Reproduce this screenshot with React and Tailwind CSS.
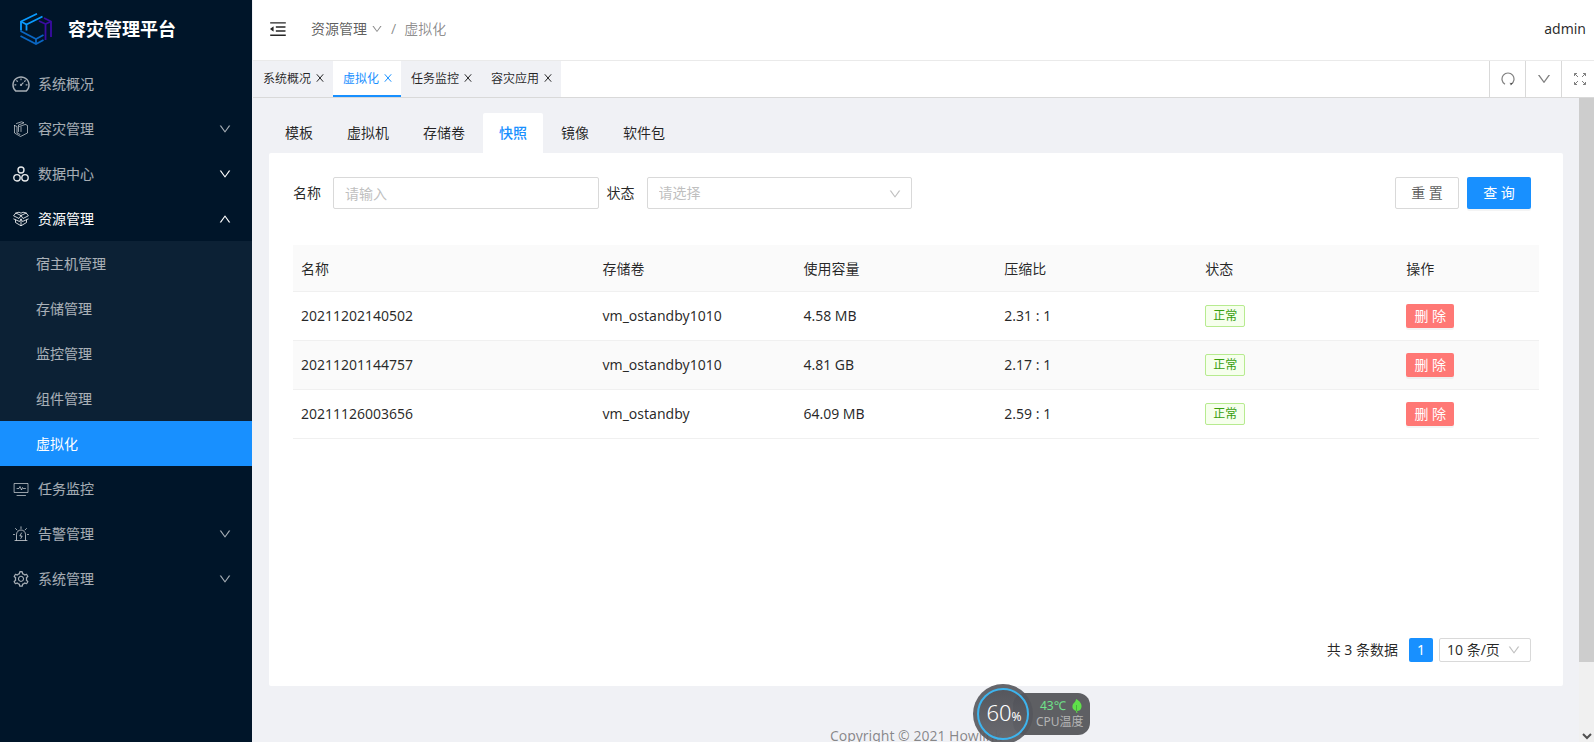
import {
  AiOutlineDashboard, AiOutlineSetting, AiOutlineDown, AiOutlineUp,
  AiOutlineMenuFold,
} from "react-icons/ai";

const stroke = { fill: "none", stroke: "currentColor", strokeLinecap: "round", strokeLinejoin: "round" };

function Logo() {
  return (
    <svg className="size-8 shrink-0" viewBox="0 0 32 32" fill="none" strokeWidth="1.800" aria-hidden="true">
      <g stroke="#0a9bff">
        <path d="M1 17.500V8.500L17 .8" />
        <path d="M6.500 17.500V11.500L22.500 3.500" />
        <path d="M1 8.500L6.500 11.500" />
      </g>
      <g stroke="#3a0ca3">
        <path d="M19 8L25.500 11V27" />
        <path d="M24 5L31 8.500V24" />
        <path d="M25.500 11L31 8.500" />
      </g>
      <g stroke="#0a66c2">
        <path d="M.5 18L16 26L23.500 22" />
        <path d="M.5 23L16 31L23.500 27" />
        <path d="M16 26V31" />
      </g>
    </svg>
  );
}

function BooksIcon() {
  return (
    <svg className="size-4" viewBox="0 0 16 16" {...stroke} strokeWidth=".9" aria-hidden="true">
      <path d="M1.500 4.500V12L7.500 15.500L14.500 12V4.500L12.500 3.500" />
      <path d="M1.500 4.500L4 5.500V12L7 13.500" />
      <path d="M3.500 2.500L8.500 .8L11 1.800L5.500 4V10.500M6.500 5.500L12 3.500M8 6V10.500" />
    </svg>
  );
}

function NodesIcon() {
  return (
    <svg className="size-4" viewBox="0 0 16 16" {...stroke} strokeWidth="1.4" aria-hidden="true">
      <circle cx="8" cy="4" r="3" />
      <circle cx="4" cy="11.800" r="3.200" />
      <circle cx="12" cy="11.800" r="3.200" />
    </svg>
  );
}

function BoxIcon() {
  return (
    <svg className="size-4" viewBox="0 0 16 16" {...stroke} strokeWidth=".9" aria-hidden="true">
      <path d="M8 4.500L2.800 2L.6 4.800L6 7.500L8 4.500L10 7.500L15.400 4.800L13.200 2L8 4.500Z" />
      <path d="M2.800 2L6 1.200L8 2.200L10 1.200L13.200 2" />
      <path d="M.8 8L6.500 10.500L8 8L9.500 10.500L15.200 8M2.500 9V11.500L8 14.800L13.500 11.500V9M8 8V14.500" />
    </svg>
  );
}

function MonitorIcon() {
  return (
    <svg className="size-4" viewBox="0 0 16 16" {...stroke} strokeWidth=".9" aria-hidden="true">
      <path d="M1.500 2.500H15V11.500H1.500ZM4 14.500H12.500" />
      <path d="M4 7.500H6L7 5.500L8.500 9L9.500 6.500L10.200 7.500H12.500" />
    </svg>
  );
}

function AlarmIcon() {
  return (
    <svg className="size-4" viewBox="0 0 16 16" {...stroke} aria-hidden="true">
      <path d="M3.500 14V8.500A4.500 4.500 0 0 1 12.500 8.500V14M2 14.500H14" />
      <path d="M8.500 7L6.800 10H9.200L7.800 12.500M8 .8V2.500M2.500 2.500L4 4M13.500 2.500L12 4M.5 8.500H1.500M14.500 8.500H15.500" />
    </svg>
  );
}

function CloseIcon() {
  return (
    <svg className="mb-0.5 size-2" viewBox="0 0 8 8" fill="none" stroke="currentColor" aria-hidden="true">
      <path d="M.8 .3L7.200 7.700M7.200 .3L.8 7.700" />
    </svg>
  );
}

function RefreshIcon() {
  return (
    <svg className="size-3.5" viewBox="0 0 14 14" fill="none" stroke="currentColor" strokeWidth="1.200" aria-hidden="true">
      <path d="M4 12.200A6 6 0 1 1 10 12.200" />
      <path fill="currentColor" stroke="none" d="M8.500 10.800L11.800 11.200L9.800 13.600Z" />
    </svg>
  );
}

function ExpandIcon() {
  return (
    <svg className="size-3" viewBox="0 0 12 12" fill="none" stroke="currentColor" aria-hidden="true">
      <path d="M.5 3V.5H3M1 1L4 4M9 .5H11.500V3M11 1L8 4M.5 9V11.500H3M1 11L4 8M9 11.500H11.500V9M11 11L8 8" />
    </svg>
  );
}

const menu = [
  { label: "系统概况", icon: <AiOutlineDashboard className="size-5" /> },
  { label: "容灾管理", icon: <BooksIcon />, arrow: "down" },
  { label: "数据中心", icon: <NodesIcon />, arrow: "down", bright: true },
  {
    label: "资源管理", icon: <BoxIcon />, arrow: "up", open: true, bright: true,
    children: ["宿主机管理", "存储管理", "监控管理", "组件管理", "虚拟化"],
  },
  { label: "任务监控", icon: <MonitorIcon /> },
  { label: "告警管理", icon: <AlarmIcon />, arrow: "down" },
  { label: "系统管理", icon: <AiOutlineSetting className="size-[18px]" />, arrow: "down" },
];

function Sidebar() {
  return (
    <aside className="flex w-[252px] shrink-0 flex-col bg-[#001529] text-white/65">
      <div className="mb-1 flex h-[57px] items-center gap-4 pl-5 text-white">
        <Logo />
        <h1 className="text-lg font-bold">容灾管理平台</h1>
      </div>
      <nav>
        <ul>
          {menu.map((item) => (
            <li key={item.label}>
              <a href="#" className="flex h-[45px] items-center gap-[7px] pl-[11px] pr-5">
                <span className={item.bright ? "flex w-5 justify-center text-white/90" : "flex w-5 justify-center"}>{item.icon}</span>
                <span className={item.open ? "flex-1 text-white" : "flex-1"}>{item.label}</span>
                {item.arrow === "down" && <AiOutlineDown className={item.bright ? "size-3.5 text-white" : "size-3.5"} />}
                {item.arrow === "up" && <AiOutlineUp className="size-3.5 text-white" />}
              </a>
              {item.children && (
                <ul className="bg-[#0c2135]">
                  {item.children.map((child) => (
                    <li key={child}>
                      <a href="#" className={child === "虚拟化" ? "flex h-[45px] items-center bg-[#1890ff] pl-9 text-white" : "flex h-[45px] items-center pl-9"}>{child}</a>
                    </li>
                  ))}
                </ul>
              )}
            </li>
          ))}
        </ul>
      </nav>
    </aside>
  );
}

function Header() {
  return (
    <header className="flex h-[61px] shrink-0 items-center border-b border-[#eaeaea] bg-white pb-0.5 pl-[15px] pr-2">
      <button type="button" aria-label="收起菜单" className="mr-[23px] text-black/85"><AiOutlineMenuFold className="size-5" /></button>
      <nav className="flex items-center text-black/45">
        <a href="#" className="flex items-center gap-1 text-black/65">资源管理<AiOutlineDown className="size-3 text-black/45" /></a>
        <span className="mx-2">/</span>
        <span>虚拟化</span>
      </nav>
      <span className="ml-auto">admin</span>
    </header>
  );
}

function PageTabs() {
  return (
    <div className="flex h-[37px] shrink-0 overflow-hidden border-b border-[#d9d9d9] bg-white text-xs">
      {["系统概况", "虚拟化", "任务监控", "容灾应用"].map((tab) => (
        <div key={tab} className={tab === "虚拟化" ? "flex items-center gap-[5px] border-b-2 border-[#1890ff] bg-white pl-2.5 pr-[9px] pt-0.5 text-[#1890ff]" : "flex items-center gap-[5px] bg-[#f0f1f5] pl-2.5 pr-[9px]"}>
          <a href="#">{tab}</a>
          <button type="button" aria-label={"关闭" + tab}><CloseIcon /></button>
        </div>
      ))}
      <div className="-mr-[3px] ml-auto flex text-black/50">
        <button type="button" aria-label="刷新" className="grid w-9 place-items-center border-l border-[#d9d9d9]"><RefreshIcon /></button>
        <button type="button" aria-label="更多" className="grid w-9 place-items-center border-l border-[#d9d9d9]"><AiOutlineDown className="size-4" /></button>
        <button type="button" aria-label="全屏" className="grid w-9 place-items-center border-l border-[#d9d9d9]"><ExpandIcon /></button>
      </div>
    </div>
  );
}

const rows = [
  ["20211202140502", "vm_ostandby1010", "4.58 MB", "2.31 : 1"],
  ["20211201144757", "vm_ostandby1010", "4.81 GB", "2.17 : 1"],
  ["20211126003656", "vm_ostandby", "64.09 MB", "2.59 : 1"],
];

function SnapshotTable() {
  return (
    <table className="mt-9 w-full table-fixed text-left">
      <colgroup>
        <col className="w-[300px]" />
        <col className="w-[200px]" />
        <col className="w-[200px]" />
        <col className="w-[200px]" />
        <col className="w-[200px]" />
        <col className="w-[140px]" />
      </colgroup>
      <thead>
        <tr className="h-[46px] border-b border-[#f0f0f0] bg-[#fafafa]">
          {["名称", "存储卷", "使用容量", "压缩比", "状态", "操作"].map((h) => (
            <th key={h} scope="col" className="px-2 pt-0.5 font-normal">{h}</th>
          ))}
        </tr>
      </thead>
      <tbody>
        {rows.map((row) => (
          <tr key={row[0]} className="h-[49px] border-b border-[#f0f0f0] even:bg-[#fafafa]">
            {row.map((cell, i) => <td key={i} className="px-2">{cell}</td>)}
            <td className="px-2">
              <span className="flex h-[22px] w-10 items-center justify-center rounded-xs border border-[#b7eb8f] bg-[#f6ffed] text-xs text-[#389e0d]">正常</span>
            </td>
            <td className="px-2">
              <button type="button" className="flex h-6 w-12 items-center justify-center whitespace-nowrap rounded-xs bg-[#ff7875] text-white shadow-[0_2px_0_rgba(0,0,0,0.045)]">删 除</button>
            </td>
          </tr>
        ))}
      </tbody>
    </table>
  );
}

function SnapshotPanel() {
  return (
    <section className="flex min-h-[533px] flex-col rounded-xs bg-white p-6">
      <form className="grid grid-cols-4 gap-2">
        <div className="flex items-center gap-3">
          <label htmlFor="name" className="shrink-0">名称</label>
          <input id="name" type="text" placeholder="请输入" className="h-8 w-full min-w-0 rounded-xs border border-[#d9d9d9] px-[11px] placeholder:text-[#bfbfbf]" />
        </div>
        <div className="flex items-center gap-3">
          <label htmlFor="state" className="shrink-0">状态</label>
          <div className="relative flex-1">
            <select id="state" defaultValue="" className="block h-8 w-full appearance-none rounded-xs border border-[#d9d9d9] bg-white px-[11px] text-[#bfbfbf]">
              <option value="">请选择</option>
              <option>正常</option>
            </select>
            <AiOutlineDown className="pointer-events-none absolute right-2.5 top-2.5 size-3.5 text-black/25" />
          </div>
        </div>
        <div className="col-start-4 flex justify-end gap-2 pr-2">
          <button type="reset" className="h-8 w-16 rounded-xs border border-[#d9d9d9] bg-white text-black/65">重 置</button>
          <button type="submit" className="h-8 w-16 rounded-xs bg-[#1890ff] text-white shadow-[0_2px_0_rgba(0,0,0,0.045)]">查 询</button>
        </div>
      </form>
      <SnapshotTable />
      <div className="mt-auto flex items-center justify-end pr-2">
        <span className="mr-[11px]">共 3 条数据</span>
        <button type="button" aria-current="page" className="mr-1.5 size-6 rounded-xs bg-[#1890ff] text-white">1</button>
        <div className="relative">
          <select aria-label="每页条数" className="block h-6 w-[92px] appearance-none rounded-xs border border-[#d9d9d9] bg-white px-[7px]">
            <option>10 条/页</option>
            <option>20 条/页</option>
          </select>
          <AiOutlineDown className="pointer-events-none absolute right-2.5 top-[5px] size-3.5 text-black/25" />
        </div>
      </div>
    </section>
  );
}

function Scrollbar() {
  return (
    <div className="flex w-[15px] shrink-0 flex-col bg-[#f0f0f0]" aria-hidden="true">
      <div className="w-full grow-[564] basis-0 bg-[#cdcdcd]" />
      <div className="flex grow-[80] basis-0 items-end justify-center">
        <svg className="mb-0.5 h-2 w-2.5" viewBox="0 0 10 8" fill="none" stroke="#505050" strokeWidth="2"><path d="M1 2L5 6L9 2" /></svg>
      </div>
    </div>
  );
}

function CpuWidget() {
  return (
    <div className="absolute bottom-[-2px] left-[973px] flex items-center text-xs">
      <div className="z-10 flex size-[60px] shrink-0 items-center justify-center rounded-full bg-[#55565c]/90 p-1">
        <div className="flex size-full items-baseline justify-center rounded-full border-2 border-[#3db4ee] bg-linear-to-b from-[#4c4d54]/60 to-[#6b6c72]/60 pl-0.5 pt-2 text-white">
          <span className="text-[22px] font-light leading-7">60</span><span>%</span>
        </div>
      </div>
      <div className="-ml-5 flex h-[42px] w-[77px] flex-col justify-center rounded-xl bg-[#55565b]/95 pl-[23px] leading-4">
        <span className="flex items-center gap-1.5 pl-1 text-[#6fe28a]">
          43℃
          <svg className="h-3.5 w-2.5" viewBox="0 0 10 14" aria-hidden="true">
            <path fill="#5fe04a" d="M4 0C8 2 10 5 9.500 8C9 11 7 12 5 12L5.500 14H4.500L4 12C1 11 0 9 .5 6.500C1 4 4 3 4 0Z" />
            <path fill="none" stroke="#3a8f34" strokeWidth=".6" d="M4.500 6V12" />
          </svg>
        </span>
        <span className="text-[#b4b4b4]">CPU温度</span>
      </div>
    </div>
  );
}

export default function App() {
  return (
    <div className="relative flex h-screen overflow-hidden bg-[#f0f1f5] font-['Noto_Sans','Noto_Sans_CJK_SC',sans-serif] text-sm text-black/85">
      <Sidebar />
      <div className="flex min-w-0 flex-1 flex-col border-l border-[#f0f1f5]">
        <Header />
        <PageTabs />
        <div className="flex min-h-0 flex-1">
          <main className="min-w-0 flex-1 overflow-hidden px-4 pt-[15px]">
            <nav className="flex gap-0.5">
              {["模板", "虚拟机", "存储卷", "快照", "镜像", "软件包"].map((tab) => (
                <a key={tab} href="#" className={tab === "快照" ? "flex h-10 items-center rounded-t-xs bg-white px-4 font-medium text-[#1890ff]" : "flex h-10 items-center px-4"}>{tab}</a>
              ))}
            </nav>
            <SnapshotPanel />
            <footer className="mt-10 text-center text-black/45">Copyright © 2021 Howlink</footer>
          </main>
          <Scrollbar />
        </div>
      </div>
      <CpuWidget />
    </div>
  );
}
